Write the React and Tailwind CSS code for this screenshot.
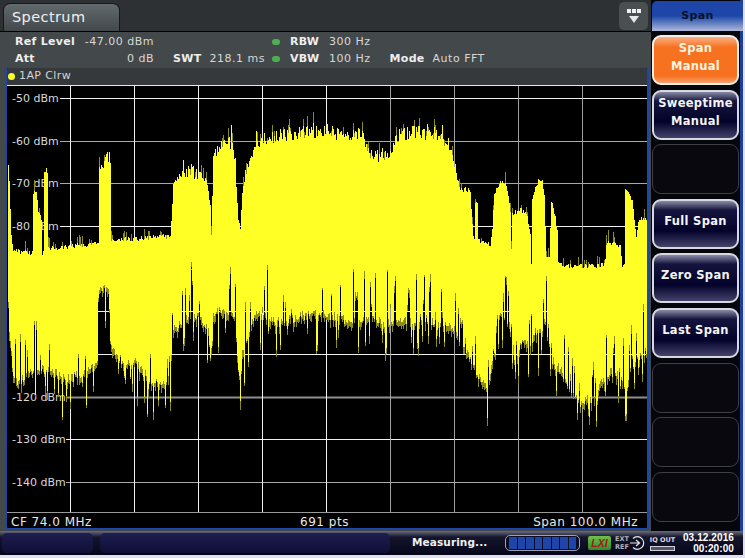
// Spectrum analyzer screen: span softkey menu
const FONT = "font-['DejaVu_Sans',sans-serif]";

const TOP = [
  [7, 158], [9, 180], [11, 235], [13, 250], [32, 252], [33, 192], [36, 190], [38, 213], [41, 217], [42, 252],
  [43, 250], [44, 166], [47, 166], [48, 248], [98, 243], [99, 166], [103, 160], [106, 155], [110, 157], [111, 240],
  [170, 235], [173, 184], [180, 173], [190, 168], [200, 173], [207, 182], [210, 207], [211, 232], [213, 157], [220, 143],
  [225, 138], [233, 143], [235, 172], [238, 218], [240, 229], [242, 193], [245, 172], [250, 153], [255, 142], [265, 135],
  [285, 132], [305, 130], [330, 128], [340, 134], [350, 133], [360, 130], [368, 147], [372, 157], [380, 153], [390, 150],
  [395, 135], [410, 130], [435, 131], [445, 140], [452, 153], [455, 167], [459, 188], [461, 188], [470, 190], [471, 210],
  [473, 236], [474, 236], [475, 200], [477, 200], [478, 238], [480, 242], [490, 243], [492, 226], [494, 193], [500, 182],
  [505, 182], [507, 188], [510, 210], [511, 248], [512, 213], [520, 208], [525, 212], [527, 217], [530, 232], [530, 262],
  [531, 262], [532, 197], [538, 180], [542, 180], [544, 197], [546, 258], [549, 258], [551, 200], [553, 207], [557, 228],
  [558, 260], [562, 265], [590, 266], [603, 264], [605, 260], [606, 243], [615, 243], [620, 245], [622, 265], [624, 262],
  [625, 187], [630, 198], [632, 200], [634, 217], [636, 237], [638, 220], [646, 217],
];

const BOTTOM = [
  [7, 296], [8, 300], [10, 337], [12, 370], [15, 380], [20, 382], [30, 370], [50, 370], [60, 377], [70, 378],
  [85, 372], [97, 363], [98, 302], [99, 286], [108, 286], [110, 340], [115, 357], [125, 360], [135, 363], [145, 375],
  [150, 380], [160, 382], [170, 377], [172, 333], [176, 327], [190, 315], [200, 316], [205, 325], [208, 330], [210, 353],
  [212, 343], [215, 310], [233, 313], [235, 320], [238, 367], [240, 380], [243, 353], [248, 330], [256, 313], [262, 310],
  [270, 320], [280, 322], [290, 320], [300, 315], [330, 315], [345, 320], [360, 320], [375, 320], [385, 325], [400, 320],
  [420, 318], [440, 322], [455, 330], [470, 358], [480, 380], [488, 388], [492, 360], [497, 313], [505, 320], [512, 330],
  [515, 368], [520, 343], [530, 343], [535, 333], [540, 332], [545, 318], [550, 333], [555, 368], [560, 367], [565, 380],
  [570, 393], [580, 403], [587, 400], [597, 398], [600, 383], [610, 373], [620, 372], [625, 393], [632, 358], [640, 357],
  [646, 350],
];

function lerp(points, x) {
  for (let i = 1; i < points.length; i++) {
    if (x <= points[i][0]) {
      const [x0, y0] = points[i - 1];
      const [x1, y1] = points[i];
      if (x1 === x0) return y1;
      return y0 + ((y1 - y0) * (x - x0)) / (x1 - x0);
    }
  }
  return points[points.length - 1][1];
}

function buildTrace() {
  let seed = 4711;
  const rnd = () => {
    seed = (seed * 16807) % 2147483647;
    return seed / 2147483647;
  };
  let main = "";
  let dim = "";
  for (let x = 8; x <= 646; x++) {
    const px = x + 0.5;
    const base = lerp(TOP, x);
    // busy bands are spikier than the flat noise floor
    const amp = base < 175 ? 14 : 5;
    let top = Math.round(base + (rnd() - 0.35) * amp);
    if (base < 175 && rnd() < 0.06) top -= 6 + Math.round(rnd() * 12);
    let bottom = Math.round(lerp(BOTTOM, x) + (rnd() - 0.5) * 10);
    const r = rnd();
    if (r < 0.14) bottom -= 12 + Math.round(rnd() * 40);
    else if (r < 0.26) bottom += 8 + Math.round(rnd() * 28);
    const peak = rnd() < 0.18 ? top - 3 - Math.round(rnd() * 8) : top;
    main += `M${px} ${top}V${bottom}`;
    dim += `M${px} ${peak}V${top}M${px} ${bottom}V${bottom + 2 + Math.round(rnd() * 7)}`;
  }
  return { main, dim };
}

const trace = buildTrace();

const H_LINES = [
  [98, "#f0f0f0", "-50 dBm", 60], [141, "#a8a8a8", "-60 dBm", 60], [183, "#a8a8a8", "-70 dBm", 60], [226, "#f0f0f0", "-80 dBm", 60],
  [269, "#a8a8a8", null, 60], [311, "#f0f0f0", null, 60], [354, "#f0f0f0", null, 60], [397, "#909090", "-120 dBm", 66],
  [439, "#f0f0f0", "-130 dBm", 66], [482, "#a8a8a8", "-140 dBm", 66],
];
const V_LINES = [
  [70, "#f0f0f0"], [134, "#f0f0f0"], [198, "#f0f0f0"], [262, "#f0f0f0"], [326, "#f0f0f0"],
  [390, "#a0a0a0"], [454, "#a0a0a0"], [518, "#a0a0a0"], [582, "#a0a0a0"],
];

function Plot() {
  // viewBox is in page coordinates so the trace table reads like the screen
  return (
    <svg viewBox="7 85 640 428" className="block shrink-0 w-[640px] h-[428px] bg-black">
      {H_LINES.map(([y, c, , start]) => (
        <line key={y} x1={start} x2="647" y1={y + 0.5} y2={y + 0.5} stroke={c} strokeWidth={y === 397 ? 2 : 1} />
      ))}
      {V_LINES.map(([x, c]) => (
        <line key={x} x1={x + 0.5} x2={x + 0.5} y1="85" y2="513" stroke={c} />
      ))}
      <line x1="7" x2="647" y1="85.5" y2="85.5" stroke="#e8e8e8" />
      <line x1="7" x2="647" y1="512.5" y2="512.5" stroke="#9a9a9a" />
      {H_LINES.filter((l) => l[2]).map(([y, , label]) => (
        <text key={y} x="12" y={y + 4} fill="#d8d8d8" fontSize="11" fontFamily="DejaVu Sans, sans-serif">
          {label}
        </text>
      ))}
      <path d={trace.dim} stroke="#8c8c1c" strokeWidth="1" fill="none" />
      <path d={trace.main} stroke="#ffff26" strokeWidth="1" fill="none" />
    </svg>
  );
}

function Softkey({ lines, active, empty }) {
  if (empty) {
    return <div className="h-[50px] w-[87px] rounded-[9px] border border-[#3e3e44] bg-[#08080e]" />;
  }
  return (
    <div
      className={
        "h-[50px] w-[87px] rounded-[9px] border-2 pb-[6px] flex flex-col items-center justify-center text-[11.5px] leading-[18px] font-bold tracking-[0.3px] " +
        (active
          ? "border-[#f4f0e8] text-[#fff4e0] bg-[linear-gradient(#f9b088,#f77220_22%,#f77220_85%,#f9a070)]"
          : "border-[#d8d8e0] text-[#f4f4f4] bg-[linear-gradient(#8a8aa8,#14143c_20%,#02022a_65%,#42426a)]")
      }
    >
      {lines.map((l) => (
        <span key={l}>{l}</span>
      ))}
    </div>
  );
}

function InfoLabel({ children, className = "" }) {
  return <span className={"font-bold text-[#eeeeee] tracking-[0.3px] " + className}>{children}</span>;
}

function Dot() {
  return <span className="w-[8px] h-[6px] rounded-full bg-[#4caf50]" />;
}

function StatusBar() {
  return (
    <div className="h-[24px] flex items-center pl-[2px] bg-[linear-gradient(#6a6c7c,#15162c_25%,#05051a)] text-[#f0f0f0] font-bold">
      <div className="w-[91px] h-[20px] rounded-[5px] bg-[linear-gradient(#1e1e50,#0e0e36)]" />
      <div className="ml-[7px] w-[290px] h-[20px] rounded-[5px] bg-[linear-gradient(#1e1e50,#0e0e36)]" />
      <span className="ml-[22px] w-[93px] text-[10.5px] tracking-[0.1px] whitespace-nowrap">Measuring...</span>
      <div className="w-[75px] h-[16px] rounded-[5px] border border-[#a0a0b0] flex gap-[1px] px-[3px] py-[1px] bg-[#0c0c24]">
        {[0, 1, 2, 3, 4, 5, 6, 7].map((i) => (
          <span key={i} className="flex-1 bg-[#1d46a8]" />
        ))}
      </div>
      <div className="ml-[8px] w-[23px] h-[14px] rounded-[2px] bg-[linear-gradient(#6fc04a,#2f8a2a)] flex items-center justify-center text-[#a01818] text-[10.5px] italic leading-none font-['Liberation_Sans',sans-serif]">
        LXI
      </div>
      <div className="ml-[4px] w-[14px] flex flex-col text-[6.5px] leading-[8px] text-[#b0b0b8]">
        <span>EXT</span>
        <span>REF</span>
      </div>
      <svg width="16" height="16" viewBox="0 0 16 16" className="ml-[1px] shrink-0" fill="none" stroke="#e8e8e8" strokeWidth="1.2">
        <path d="M3 3.5A6.3 6.3 0 1 1 3 12.5" />
        <path d="M0 8H9M6 5L9.5 8L6 11" />
      </svg>
      <div className="ml-[3px] w-[27px] flex flex-col items-center gap-[1px]">
        <span className="text-[6.5px] leading-[10px] text-[#d8d8e0] whitespace-nowrap">IQ OUT</span>
        <span className="w-[25px] h-[5px] border border-[#d0d0d8] bg-[#55556a]" />
      </div>
      <div className="ml-[7px] w-[51px] flex flex-col items-end text-[10px] leading-[11px] tracking-[0.1px] text-white font-['Liberation_Sans',sans-serif]">
        <span>03.12.2016</span>
        <span>00:20:00</span>
      </div>
    </div>
  );
}

export default function App() {
  return (
    <div className={"w-[745px] h-[558px] overflow-hidden bg-[#dfdfee] text-[11px] " + FONT}>
      <div className="h-[555px] w-[743px] flex flex-col">
        <div className="h-[531px] flex bg-[#43484b]">
          <div className="w-[651px] shrink-0 flex flex-col">
            {/* tab row */}
            <div className="h-[32px] flex items-end pl-[3px] pr-[3px] bg-[#2e3134] border-b border-black">
              <div className="w-[117px] h-[28px] rounded-t-[7px] border border-b-0 border-[#15171a] bg-linear-to-b from-[#626a6e] to-[#43484b] pl-[8px] pt-[3px] text-[14.5px] tracking-[0.4px] text-[#f0f0f0]">
                Spectrum
              </div>
              <div className="ml-auto mb-[1px] w-[29px] h-[28px] rounded-[5px] bg-[#4a4f52] flex flex-col items-center justify-center gap-[3px]">
                <div className="flex gap-[1px]">
                  <span className="w-[4px] h-[4px] bg-[#f0f0f0]" />
                  <span className="w-[4px] h-[4px] bg-[#f0f0f0]" />
                  <span className="w-[4px] h-[4px] bg-[#f0f0f0]" />
                </div>
                <svg width="10" height="7" viewBox="0 0 10 7">
                  <path d="M0 0H10L5 7Z" fill="#e8e8e8" />
                </svg>
              </div>
            </div>

            {/* measurement settings */}
            <div className="h-[35px] shrink-0 text-[#d8d8d8] flex pl-[15px] pt-[1px] leading-[17px] tracking-[0.5px]">
              <div className="w-[139px] flex flex-col">
                <div className="flex justify-between">
                  <InfoLabel>Ref Level</InfoLabel>
                  <span>-47.00 dBm</span>
                </div>
                <div className="flex justify-between">
                  <InfoLabel>Att</InfoLabel>
                  <span>0 dB</span>
                </div>
              </div>
              <div className="w-[100px] ml-[19px] flex items-end">
                <InfoLabel>SWT</InfoLabel>
                <span className="ml-[8px] whitespace-nowrap">218.1 ms</span>
              </div>
              <div className="-ml-[1px] flex flex-col">
                <div className="flex items-center">
                  <Dot />
                  <InfoLabel className="ml-[10px] w-[39px]">RBW</InfoLabel>
                  <span>300 Hz</span>
                </div>
                <div className="flex items-center">
                  <Dot />
                  <InfoLabel className="ml-[10px] w-[39px]">VBW</InfoLabel>
                  <span>100 Hz</span>
                </div>
              </div>
              <div className="ml-[19px] flex items-end">
                <InfoLabel>Mode</InfoLabel>
                <span className="ml-[8px] whitespace-nowrap">Auto FFT</span>
              </div>
            </div>

            {/* diagram */}
            <div className="ml-[5px] w-[644px] h-[463px] shrink-0 rounded-[3px] border-2 border-t border-[#1d46a8] flex flex-col bg-black overflow-hidden">
              <div className="h-[17px] shrink-0 bg-[#35393c] text-[#d4d4d4] flex items-center pl-[1px] text-[11px] tracking-[0.4px]">
                <span className="w-[7px] h-[7px] rounded-full bg-[#ffff26] mr-[4px]" />
                1AP Clrw
              </div>
              <Plot />
              <div className="flex-1 flex items-center justify-between pl-[4px] pr-[9px] text-[#e8e8e8] text-[12px] tracking-[0.5px]">
                <span className="w-[130px]">CF 74.0 MHz</span>
                <span>691 pts</span>
                <span className="w-[130px] text-right whitespace-nowrap">Span 100.0 MHz</span>
              </div>
            </div>
          </div>

          {/* softkeys */}
          <div className="flex-1 flex flex-col items-start pl-[1px] bg-[linear-gradient(to_right,#05060c_89px,#1d3f98_89px)]">
            <div className="h-[30px] mt-[1px] w-[91px] rounded-t-[5px] bg-linear-to-b from-[#1d46a8] via-[#1d46a8] to-[#b0b8d8] text-[#06122e] font-bold text-[11px] tracking-[0.3px] flex items-center justify-center">
              Span
            </div>
            <div className="mt-[4px] flex flex-col gap-[4.6px]">
              <Softkey active lines={["Span", "Manual"]} />
              <Softkey lines={["Sweeptime", "Manual"]} />
              <Softkey empty />
              <Softkey lines={["Full Span"]} />
              <Softkey lines={["Zero Span"]} />
              <Softkey lines={["Last Span"]} />
              <Softkey empty />
              <Softkey empty />
              <Softkey empty />
            </div>
          </div>
        </div>
        <StatusBar />
      </div>
    </div>
  );
}
